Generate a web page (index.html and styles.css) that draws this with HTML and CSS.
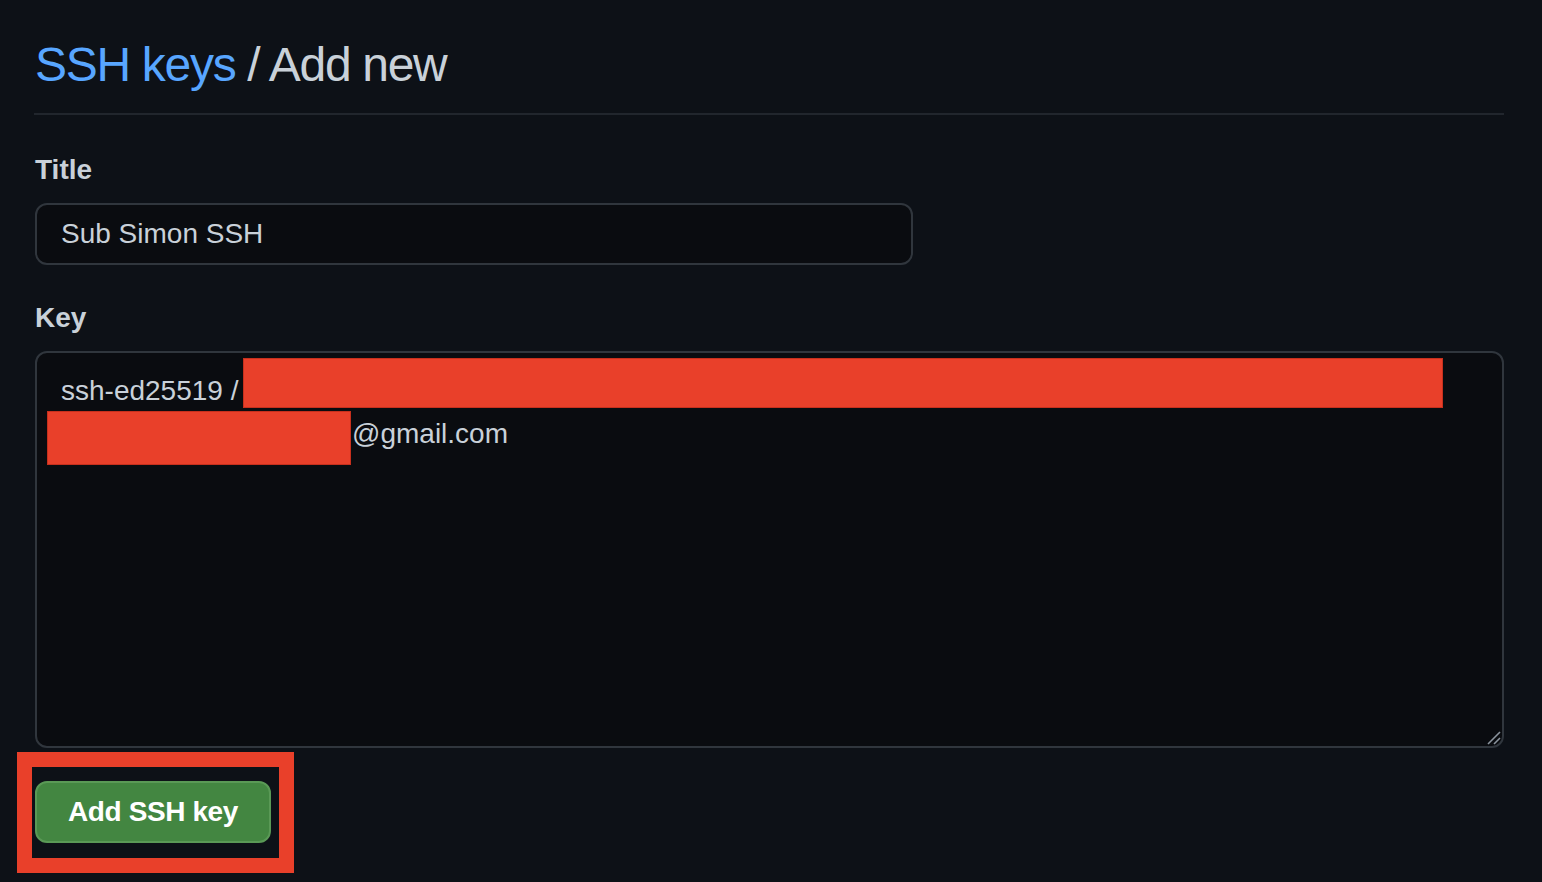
FILE: index.html
```html
<!DOCTYPE html>
<html lang="en">
<head>
<meta charset="utf-8">
<title>SSH keys / Add new</title>
<link rel="stylesheet" href="styles.css">
</head>
<body>
<main class="page">
  <div class="subhead">
    <h1 class="subhead-heading"><a class="crumb-link" href="#">SSH keys</a> / Add new</h1>
  </div>
  <form class="form">
    <div class="form-group">
      <label class="form-label">Title</label>
      <div class="input">Sub Simon SSH</div>
    </div>
    <div class="form-group form-group-last">
      <label class="form-label">Key</label>
      <div class="textarea">
        <div class="key-line">ssh-ed25519 /</div>
        <div class="key-line"><span class="key-spacer"></span>@gmail.com</div>
        <span class="redact redact-one"></span>
        <span class="redact redact-two"></span>
        <svg class="resize-grip" width="14" height="14" viewBox="0 0 14 14" aria-hidden="true">
          <line x1="1" y1="13" x2="13" y2="1" stroke="#8b949e" stroke-width="1.6"/>
          <line x1="7" y1="13" x2="13" y2="7" stroke="#8b949e" stroke-width="1.6"/>
        </svg>
      </div>
    </div>
    <div class="highlight-box">
      <button type="button" class="btn-primary">Add SSH key</button>
    </div>
  </form>
</main>
</body>
</html>
```
FILE: styles.css
```css
html, body {
  margin: 0;
  padding: 0;
  background: #0d1117;
}
body {
  font-family: "Liberation Sans", Arial, sans-serif;
  color: #c9d1d9;
}
.page {
  padding: 35px 38px 0 35px;
}
.subhead {
  padding-bottom: 18px;
  border-bottom: 2px solid #21262d;
  margin-left: -1px;
  padding-left: 1px;
}
.subhead-heading {
  margin: 0;
  font-size: 48px;
  line-height: 60px;
  font-weight: 400;
  letter-spacing: -1.3px;
  color: #c9d1d9;
}
.crumb-link {
  color: #58a6ff;
  text-decoration: none;
}
.form {
  padding-top: 35px;
}
.form-group {
  margin-bottom: 33px;
}
.form-group-last {
  margin-bottom: 4px;
}
.form-label {
  display: block;
  font-size: 28px;
  line-height: 40px;
  font-weight: 700;
  color: #c9d1d9;
  margin-bottom: 13px;
}
.input {
  box-sizing: border-box;
  width: 878px;
  height: 62px;
  border: 2px solid #30363d;
  border-radius: 12px;
  background: #0a0c10;
  padding: 0 24px;
  font-size: 28px;
  line-height: 58px;
  color: #c9d1d9;
}
.textarea {
  position: relative;
  box-sizing: border-box;
  height: 397px;
  border: 2px solid #30363d;
  border-radius: 12px;
  background: #0a0c10;
  padding: 16px 24px;
  font-size: 28px;
  line-height: 43px;
  color: #c9d1d9;
}
.key-line {
  white-space: nowrap;
}
.key-spacer {
  display: inline-block;
  width: 291px;
}
.redact {
  position: absolute;
  background: #e9402a;
  box-shadow: inset 0 0 0 1px #c7301d;
}
.redact-one {
  left: 206px;
  top: 5px;
  width: 1200px;
  height: 50px;
}
.redact-two {
  left: 10px;
  top: 58px;
  width: 304px;
  height: 54px;
}
.resize-grip {
  position: absolute;
  right: 1px;
  bottom: 1px;
}
.highlight-box {
  display: inline-block;
  margin-left: -18px;
  border: 15px solid #e9402a;
  padding: 14px 8px 15px 3px;
}
.btn-primary {
  display: block;
  box-sizing: border-box;
  width: 236px;
  height: 62px;
  border: 2px solid #5a9956;
  border-radius: 12px;
  background: #438641;
  color: #ffffff;
  font-family: "Liberation Sans", Arial, sans-serif;
  font-size: 28px;
  font-weight: 700;
  letter-spacing: -0.4px;
  padding: 0;
  cursor: pointer;
}
```
